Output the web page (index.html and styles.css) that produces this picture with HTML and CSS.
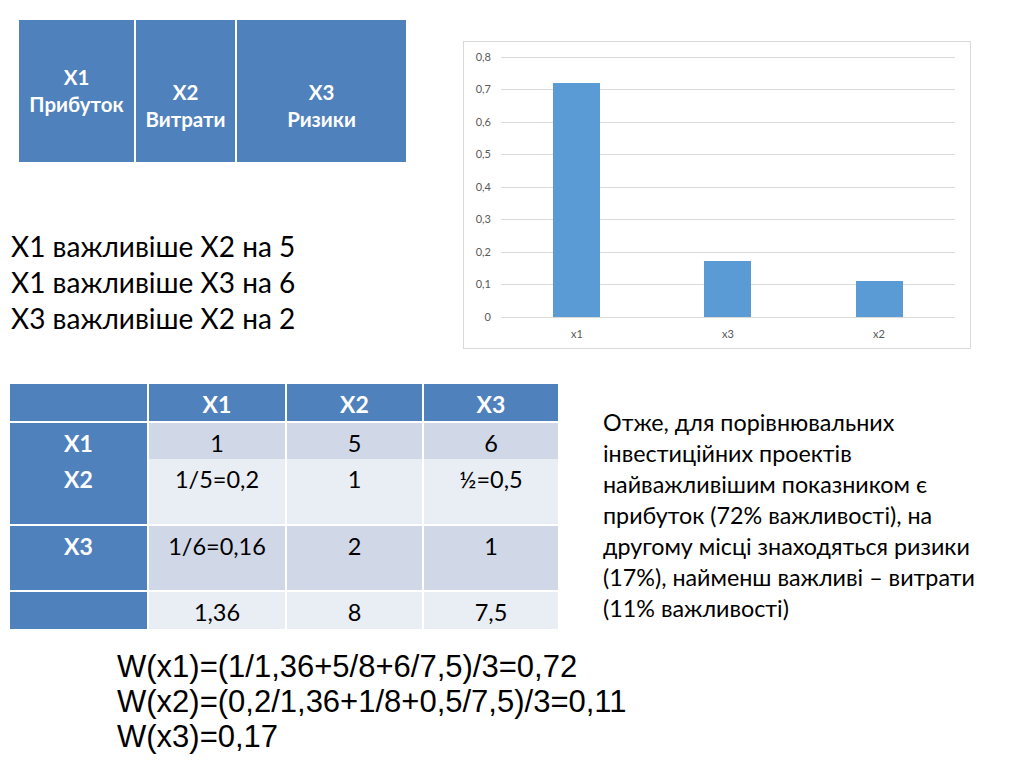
FILE: index.html
```html
<!DOCTYPE html>
<html lang="uk">
<head>
<meta charset="utf-8">
<title>Ієрархія показників</title>
<link rel="stylesheet" href="styles.css">
</head>
<body>
<main class="slide">
  <section class="upper">
    <div class="left-col">
      <div class="head-table">
        <div class="hcell">X1<br>Прибуток</div>
        <div class="hcell shifted">X2<br>Витрати</div>
        <div class="hcell shifted">X3<br>Ризики</div>
      </div>
      <div class="facts">
        <p>X1 важливіше X2 на 5</p>
        <p>X1 важливіше X3 на 6</p>
        <p>X3 важливіше X2 на 2</p>
      </div>
    </div>
    <div class="chart">
      <svg width="508" height="308" viewBox="0 0 508 308" xmlns="http://www.w3.org/2000/svg">
        <rect x="0.5" y="0.5" width="507" height="307" fill="#fff" stroke="#d9d9d9"/>
        <g stroke="#d9d9d9" stroke-width="1">
          <line x1="38" y1="16.5" x2="492" y2="16.5"/>
          <line x1="38" y1="48.5" x2="492" y2="48.5"/>
          <line x1="38" y1="81.5" x2="492" y2="81.5"/>
          <line x1="38" y1="113.5" x2="492" y2="113.5"/>
          <line x1="38" y1="146.5" x2="492" y2="146.5"/>
          <line x1="38" y1="178.5" x2="492" y2="178.5"/>
          <line x1="38" y1="211.5" x2="492" y2="211.5"/>
          <line x1="38" y1="243.5" x2="492" y2="243.5"/>
          <line x1="38" y1="276.5" x2="492" y2="276.5"/>
        </g>
        <g fill="#5b9bd5">
          <rect x="90" y="42" width="47" height="234"/>
          <rect x="241" y="220" width="47" height="56"/>
          <rect x="393" y="240" width="47" height="36"/>
        </g>
        <g class="axis" text-anchor="end">
          <text x="28" y="20">0,8</text>
          <text x="28" y="52">0,7</text>
          <text x="28" y="85">0,6</text>
          <text x="28" y="117">0,5</text>
          <text x="28" y="150">0,4</text>
          <text x="28" y="182">0,3</text>
          <text x="28" y="215">0,2</text>
          <text x="28" y="247">0,1</text>
          <text x="28" y="280">0</text>
        </g>
        <g class="axis" text-anchor="middle">
          <text x="114" y="297">x1</text>
          <text x="265" y="297">x3</text>
          <text x="416" y="297">x2</text>
        </g>
      </svg>
    </div>
  </section>

  <section class="middle">
    <div class="matrix">
      <div class="mrow head">
        <div class="mc"></div>
        <div class="mc">X1</div>
        <div class="mc">X2</div>
        <div class="mc">X3</div>
      </div>
      <div class="mbody">
        <div class="mrow r1">
          <div class="mc lab">X1</div>
          <div class="mc dark">1</div>
          <div class="mc dark">5</div>
          <div class="mc dark">6</div>
        </div>
        <div class="mrow r2">
          <div class="mc lab">X2</div>
          <div class="mc light">1/5=0,2</div>
          <div class="mc light">1</div>
          <div class="mc light">½=0,5</div>
        </div>
        <div class="mrow r3">
          <div class="mc lab">X3</div>
          <div class="mc dark">1/6=0,16</div>
          <div class="mc dark">2</div>
          <div class="mc dark">1</div>
        </div>
        <div class="mrow r4">
          <div class="mc lab"></div>
          <div class="mc light">1,36</div>
          <div class="mc light">8</div>
          <div class="mc light">7,5</div>
        </div>
      </div>
    </div>
    <p class="conclusion">Отже, для порівнювальних інвестиційних проектів найважливішим показником є прибуток (72% важливості), на другому місці знаходяться ризики (17%), найменш важливі – витрати (11% важливості)</p>
  </section>

  <section class="formulas">
    <p>W(x1)=(1/1,36+5/8+6/7,5)/3=0,72</p>
    <p>W(x2)=(0,2/1,36+1/8+0,5/7,5)/3=0,11</p>
    <p>W(x3)=0,17</p>
  </section>
</main>
</body>
</html>
```

FILE: styles.css
```css
html, body {
  margin: 0;
  padding: 0;
  background: #fff;
}

.slide {
  width: 1024px;
  height: 767px;
  overflow: hidden;
  font-family: Lato, "Open Sans", sans-serif;
  color: #000;
}

p {
  margin: 0;
}

.upper {
  display: flex;
  align-items: flex-start;
}

.left-col {
  width: 463px;
  display: flex;
  flex-direction: column;
}

.head-table {
  margin: 20px 0 0 19px;
  display: grid;
  grid-template-columns: 115px 99px 169px;
  column-gap: 2px;
  height: 142px;
  width: 387px;
}

.hcell {
  background: #4f81bd;
  color: #fff;
  font-weight: 700;
  font-size: 20.5px;
  line-height: 27px;
  display: flex;
  align-items: center;
  justify-content: center;
  text-align: center;
}

.hcell.shifted {
  padding-top: 30px;
}

.facts {
  margin-top: 66px;
  padding-left: 11px;
  font-size: 28px;
  line-height: 36px;
}

.chart {
  margin-top: 41px;
  width: 508px;
  height: 308px;
}

.chart svg {
  display: block;
}

.axis text {
  font-family: Lato, sans-serif;
  font-size: 11px;
  fill: #595959;
}

.middle {
  margin-top: 35px;
  display: flex;
  align-items: flex-start;
}

.matrix {
  margin-left: 10px;
  width: 548px;
  display: flex;
  flex-direction: column;
  row-gap: 5px;
}

.mbody {
  display: flex;
  flex-direction: column;
  row-gap: 2px;
}

.mrow {
  display: grid;
  grid-template-columns: 137px 136px 135px 134px;
  column-gap: 2px;
  height: 34px;
}

.mrow.r2 { height: 65px; }
.mrow.r3 { height: 64px; }
.mrow.r4 { height: 35px; }

.mc {
  box-sizing: border-box;
  padding-top: 3px;
  font-size: 23.5px;
  line-height: 34px;
  text-align: center;
}

.head .mc,
.mc.lab {
  background: #4f81bd;
  color: #fff;
  font-weight: 700;
  font-size: 23px;
}

.mc.dark { background: #d0d8e8; }
.mc.light { background: #e9edf4; }

.conclusion {
  margin: 23px 0 0 45px;
  width: 400px;
  font-size: 23.3px;
  line-height: 31px;
}

.formulas {
  margin: 22px 0 0 117px;
  font-family: "Liberation Sans", Arial, sans-serif;
  font-size: 31px;
  line-height: 35px;
}
```
